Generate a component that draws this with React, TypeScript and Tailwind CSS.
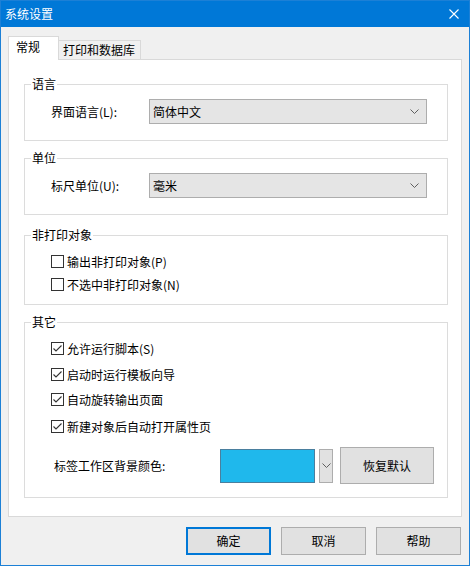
import React from 'react';

const Chevron: React.FC<{ className?: string }> = ({ className }) => (
  <svg width="9" height="5" viewBox="0 0 9 5" className={className}>
    <polyline points="0.5,0.5 4.5,4.5 8.5,0.5" fill="none" stroke="#5f5f5f" strokeWidth="1" />
  </svg>
);

const CheckBox: React.FC<{ checked?: boolean; label: string }> = ({ checked, label }) => (
  <div className="flex items-center h-[13px]">
    <div className="w-[13px] h-[13px] border border-[#333333] bg-white flex items-center justify-center shrink-0">
      {checked && (
        <svg width="11" height="11" viewBox="0 0 11 11">
          <polyline points="1.5,5.5 4,8 9.5,2.5" fill="none" stroke="#333333" strokeWidth="1.1" />
        </svg>
      )}
    </div>
    <span className="ml-[3px] leading-[16px] whitespace-nowrap">{label}</span>
  </div>
);

const Group: React.FC<{ title: string; className: string; children: React.ReactNode }> = ({ title, className, children }) => (
  <div className={`relative border border-[#dcdcdc] shrink-0 ${className}`}>
    <span className="absolute -top-[9px] left-[6px] bg-white px-[1px] leading-[16px]">{title}</span>
    {children}
  </div>
);

const Combo: React.FC<{ label: string; value: string }> = ({ label, value }) => (
  <div className="flex items-center pl-[26px] pt-[14px]">
    <span className="w-[98px] leading-[16px]">{label}</span>
    <div className="w-[278px] h-[25px] bg-[#e5e5e5] border border-[#adadad] flex items-center justify-between pl-[3px] pr-[7px]">
      <span className="leading-[16px]">{value}</span>
      <Chevron />
    </div>
  </div>
);

export default function App() {
  return (
    <div className="w-[470px] h-[566px] flex flex-col border border-[#1c80d6] bg-[#f0f0f0] text-[12px] text-black font-['Microsoft_YaHei','Noto_Sans_CJK_SC',sans-serif] overflow-hidden">
      <div className="h-[26px] shrink-0 bg-[#0078d7] flex items-center justify-between pl-[4px] pr-[10px] text-white">
        <span className="leading-[16px]">系统设置</span>
        <svg width="10" height="10" viewBox="0 0 10 10">
          <path d="M0.5 0.5 L9.5 9.5 M9.5 0.5 L0.5 9.5" stroke="#ffffff" strokeWidth="1.1" />
        </svg>
      </div>

      <div className="flex-1 flex flex-col px-[7px]">
        <div className="flex items-end h-[23px] mt-[9px] shrink-0">
          <div className="relative z-10 w-[51px] h-[24px] -mb-px bg-white border border-b-0 border-[#d9d9d9] pl-[7px] pt-[2px] leading-[16px]">
            常规
          </div>
          <div className="w-[82px] h-[19px] bg-[#f0f0f0] border border-b-0 border-l-0 border-[#d9d9d9] pl-[4px] pt-[1px] leading-[16px]">
            打印和数据库
          </div>
        </div>

        <div className="h-[458px] shrink-0 border border-[#d9d9d9] bg-white flex flex-col pl-[15px] pr-[13px]">
          <Group title="语言" className="mt-[24px] h-[57px]">
            <Combo label="界面语言(L):" value="简体中文" />
          </Group>
          <Group title="单位" className="mt-[17px] h-[57px]">
            <Combo label="标尺单位(U):" value="毫米" />
          </Group>
          <Group title="非打印对象" className="mt-[20px] h-[70px]">
            <div className="flex flex-col gap-[10px] pl-[26px] pt-[19px]">
              <CheckBox label="输出非打印对象(P)" />
              <CheckBox label="不选中非打印对象(N)" />
            </div>
          </Group>
          <Group title="其它" className="mt-[17px] h-[176px]">
            <div className="flex flex-col pl-[26px] pt-[19px]">
              <CheckBox checked label="允许运行脚本(S)" />
              <div className="mt-[13px]">
                <CheckBox checked label="启动时运行模板向导" />
              </div>
              <div className="mt-[12px]">
                <CheckBox checked label="自动旋转输出页面" />
              </div>
              <div className="mt-[14px]">
                <CheckBox checked label="新建对象后自动打开属性页" />
              </div>
            </div>
            <div className="flex items-center h-[37px] mt-[14px] pl-[29px]">
              <span className="w-[166px] leading-[16px]">标签工作区背景颜色:</span>
              <div className="w-[95px] h-[34px] bg-[#1fb8ec] border border-[#4a7f9e]" />
              <div className="ml-[4px] w-[14px] h-[34px] bg-[#e1e1e1] border border-[#adadad] flex items-center justify-center">
                <Chevron />
              </div>
              <div className="ml-[7px] w-[94px] h-[37px] bg-[#e1e1e1] border border-[#adadad] flex items-center justify-center leading-[16px]">
                恢复默认
              </div>
            </div>
          </Group>
        </div>

        <div className="flex mt-[10px] pl-[178px] gap-[10px] shrink-0">
          <div className="w-[85px] h-[28px] bg-[#e1e1e1] border-2 border-[#0078d7] flex items-center justify-center leading-[16px]">
            确定
          </div>
          <div className="w-[85px] h-[28px] bg-[#e1e1e1] border border-[#adadad] flex items-center justify-center leading-[16px]">
            取消
          </div>
          <div className="w-[85px] h-[28px] bg-[#e1e1e1] border border-[#adadad] flex items-center justify-center leading-[16px]">
            帮助
          </div>
        </div>
      </div>
    </div>
  );
}
